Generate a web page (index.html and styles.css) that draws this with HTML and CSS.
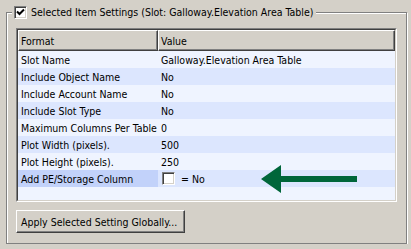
FILE: index.html
```html
<!DOCTYPE html>
<html lang="en">
<head>
<meta charset="UTF-8">
<title>Selected Item Settings</title>
<link rel="stylesheet" href="styles.css">
</head>
<body>

<fieldset class="group">
    <legend class="group-title">
        <span class="check">
            <svg width="9" height="9" viewBox="0 0 9 9"><path d="M1 3.5 L3.5 6 L8 1.5" fill="none" stroke="#000" stroke-width="2"/></svg>
        </span>
        Selected Item Settings (Slot: Galloway.Elevation Area Table)
    </legend>

    <div class="grid-frame">
        <div class="grid">
            <div class="grid-head">
                <div class="head-cell">Format</div>
                <div class="head-cell">Value</div>
            </div>
            <div class="grid-row"><div class="cell">Slot Name</div><div class="cell">Galloway.Elevation Area Table</div></div>
            <div class="grid-row"><div class="cell">Include Object Name</div><div class="cell">No</div></div>
            <div class="grid-row"><div class="cell">Include Account Name</div><div class="cell">No</div></div>
            <div class="grid-row"><div class="cell">Include Slot Type</div><div class="cell">No</div></div>
            <div class="grid-row"><div class="cell">Maximum Columns Per Table</div><div class="cell">0</div></div>
            <div class="grid-row"><div class="cell">Plot Width (pixels).</div><div class="cell">500</div></div>
            <div class="grid-row"><div class="cell">Plot Height (pixels).</div><div class="cell">250</div></div>
            <div class="grid-row">
                <div class="cell selected">Add PE/Storage Column</div>
                <div class="cell bool"><span class="check"></span>= No</div>
            </div>
        </div>
        <!-- annotation arrow drawn over the grid -->
        <svg class="pointer" width="96" height="29" viewBox="0 0 96 29">
            <polygon points="0,14 20,0 20,11 96,11 96,17 20,17 20,28" fill="#00663a"/>
        </svg>
    </div>

    <button type="button" class="apply">Apply Selected Setting Globally...</button>
</fieldset>

</body>
</html>
```

FILE: styles.css
```css
body {
  margin: 0;
  padding: 6px 0 0 6px;
  background-color: #d4d0c8;
  font-family: "DejaVu Sans Condensed", "Liberation Sans", sans-serif;
  font-size: 10.5px;
  color: #000;
}
.group {
  margin: 0;
  width: 401px;
  box-sizing: border-box;
  padding: 9px 9px 10px 9px;
  border: 1px solid #808080;
  box-shadow: inset 1px 1px 0 #fff, 1px 1px 0 #fff;
}
.group-title {
  display: flex;
  align-items: center;
  gap: 4px;
  height: 13px;
  margin-left: -4px;
  padding: 0 3px 0 2px;
  background: #d4d0c8;
  line-height: 13px;
}
.check {
  display: inline-flex;
  align-items: center;
  justify-content: center;
  width: 13px;
  height: 13px;
  box-sizing: border-box;
  border: 1px solid;
  border-color: #808080 #fff #fff #808080;
  box-shadow: inset 1px 1px 0 #404040, inset -1px -1px 0 #d4d0c8;
  background: #fff;
}
.grid-frame {
  position: relative;
  border: 1px solid;
  border-color: #808080 #fff #fff #808080;
}
.grid {
  height: 170px;
  border: 1px solid;
  border-color: #404040 #d4d0c8 #d4d0c8 #404040;
  background: #eff4ff;
}
.grid-head, .grid-row {
  display: grid;
  grid-template-columns: 140px 1fr;
}
.head-cell {
  height: 21px;
  box-sizing: border-box;
  padding: 1px 0 0 2px;
  line-height: 18px;
  background: #d4d0c8;
  border: 1px solid;
  border-color: #fff #404040 #404040 #fff;
  box-shadow: inset -1px -1px 0 #808080;
}
.cell {
  height: 17px;
  box-sizing: border-box;
  padding: 1px 0 0 3px;
  line-height: 16px;
  white-space: nowrap;
}
.grid-row:nth-child(odd) {
  background: #dce6fe;
}
.cell.selected {
  background: #c2d2fa;
}
.cell.bool {
  display: flex;
  align-items: center;
  gap: 6px;
  padding: 0 0 0 4px;
}
.pointer {
  position: absolute;
  left: 244px;
  top: 136px;
}
.apply {
  display: block;
  margin-top: 8px;
  width: 169px;
  height: 23px;
  padding: 0 0 0 4px;
  text-align: left;
  font: inherit;
  color: #000;
  background: #d4d0c8;
  border: 1px solid;
  border-color: #fff #404040 #404040 #fff;
  box-shadow: inset -1px -1px 0 #808080;
}
```
